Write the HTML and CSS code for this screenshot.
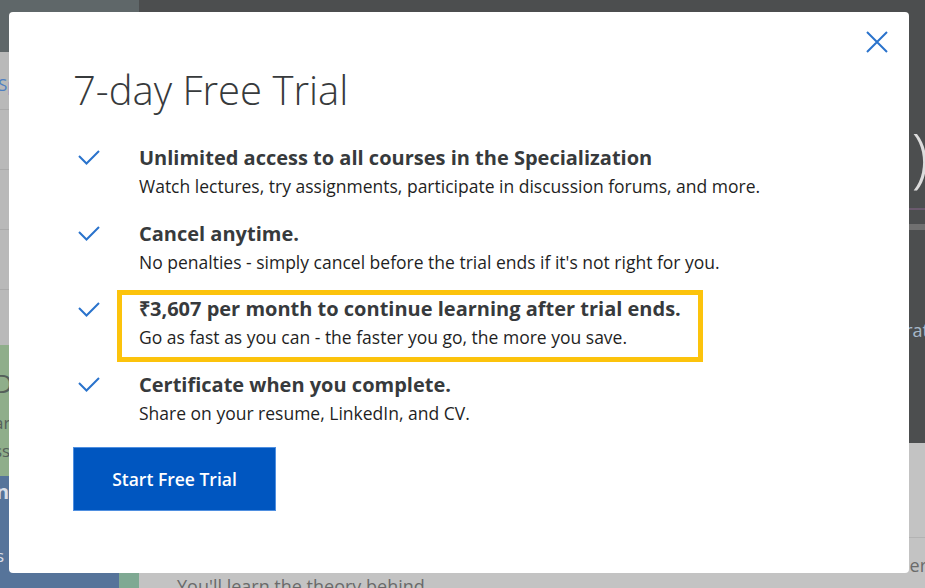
FILE: index.html
```html
<!DOCTYPE html>
<html lang="en">
<head>
    <meta charset="UTF-8">
    <meta name="viewport" content="width=device-width, initial-scale=1.0">
    <title>7-day Free Trial</title>
    <link rel="stylesheet" href="styles.css">
</head>
<body>
    <div class="page">
        <div class="side">
            <div class="side-top"></div>
            <div class="side-list">
                <div class="side-row side-link">Specialization</div>
                <div class="side-row"></div>
                <div class="side-row"></div>
                <div class="side-row"></div>
            </div>
            <div class="side-green">
                <div class="green-title">Do</div>
                <div class="green-text">art</div>
                <div class="green-text">ss</div>
            </div>
            <div class="side-bottom">
                <div class="side-blue">
                    <div class="blue-title">nr</div>
                    <div class="blue-text">s l</div>
                </div>
                <div class="side-strip"></div>
            </div>
        </div>
        <div class="main">
            <div class="hero">
                <div class="hero-mark">)</div>
                <div class="hero-stripe"></div>
                <div class="hero-text">rat</div>
            </div>
            <div class="below">
                <div class="below-tab"></div>
                <div class="below-text">er</div>
                <div class="below-line">You'll learn the theory behind</div>
            </div>
        </div>
    </div>

    <div class="modal">
        <button class="close" aria-label="Close">
            <svg width="22" height="22" viewBox="0 0 22 22">
                <path d="M1 1 L21 21 M21 1 L1 21" stroke="#2a73cc" stroke-width="2" fill="none"/>
            </svg>
        </button>
        <h1>7-day Free Trial</h1>
        <ul class="benefits">
            <li class="benefit">
                <svg class="check" width="22" height="15" viewBox="0 0 22 15">
                    <path d="M1 6 L8.5 13.5 L21 1" stroke="#2a73cc" stroke-width="2" fill="none"/>
                </svg>
                <div class="benefit-text">
                    <div class="benefit-title">Unlimited access to all courses in the Specialization</div>
                    <div class="benefit-sub">Watch lectures, try assignments, participate in discussion forums, and more.</div>
                </div>
            </li>
            <li class="benefit">
                <svg class="check" width="22" height="15" viewBox="0 0 22 15">
                    <path d="M1 6 L8.5 13.5 L21 1" stroke="#2a73cc" stroke-width="2" fill="none"/>
                </svg>
                <div class="benefit-text">
                    <div class="benefit-title">Cancel anytime.</div>
                    <div class="benefit-sub">No penalties - simply cancel before the trial ends if it's not right for you.</div>
                </div>
            </li>
            <li class="benefit">
                <svg class="check" width="22" height="15" viewBox="0 0 22 15">
                    <path d="M1 6 L8.5 13.5 L21 1" stroke="#2a73cc" stroke-width="2" fill="none"/>
                </svg>
                <div class="benefit-text highlight">
                    <div class="benefit-title">₹3,607 per month to continue learning after trial ends.</div>
                    <div class="benefit-sub">Go as fast as you can - the faster you go, the more you save.</div>
                </div>
            </li>
            <li class="benefit">
                <svg class="check" width="22" height="15" viewBox="0 0 22 15">
                    <path d="M1 6 L8.5 13.5 L21 1" stroke="#2a73cc" stroke-width="2" fill="none"/>
                </svg>
                <div class="benefit-text">
                    <div class="benefit-title">Certificate when you complete.</div>
                    <div class="benefit-sub">Share on your resume, LinkedIn, and CV.</div>
                </div>
            </li>
        </ul>
        <button class="start">Start Free Trial</button>
    </div>
</body>
</html>
```

FILE: styles.css
```css
body {
    margin: 0;
    height: 588px;
    overflow: hidden;
    font-family: "Open Sans", Arial, sans-serif;
    position: relative;
}
.page {
    display: flex;
    height: 588px;
}
.side {
    width: 139px;
    display: flex;
    flex-direction: column;
}
.side-top {
    height: 52px;
    background-color: #5f6769;
}
.side-list {
    height: 293px;
    background-color: #b9b9b9;
}
.side-row {
    height: 59px;
    border-bottom: 1px solid #aaaaaa;
}
.side-row:first-child {
    height: 57px;
}
.side-link {
    color: #4f80c2;
    font-size: 17px;
    line-height: 66px;
    margin-left: -2px;
}
.side-green {
    height: 131px;
    background-color: #8fae8a;
    color: #55605a;
    padding-top: 20px;
    box-sizing: border-box;
}
.green-title {
    font-size: 26px;
    line-height: 36px;
    margin-left: -6px;
}
.green-text {
    font-size: 17px;
    line-height: 28px;
    margin-left: -6px;
}
.green-title + .green-text {
    margin-top: 8px;
}
.side-bottom {
    flex: 1;
    display: flex;
}
.side-blue {
    width: 119px;
    background-color: #56749a;
    color: #d8dde6;
    padding-top: 2px;
}
.blue-title {
    font-size: 20px;
    font-weight: bold;
    line-height: 28px;
    margin-left: -4px;
}
.blue-text {
    font-size: 17px;
    line-height: 28px;
    margin-top: 36px;
    margin-left: -4px;
}
.side-strip {
    flex: 1;
    background-color: #7fa993;
}
.main {
    flex: 1;
    display: flex;
    flex-direction: column;
}
.hero {
    flex: none;
    height: 443px;
    background-color: #4c4e4f;
    display: flex;
    flex-direction: column;
    align-items: flex-end;
    color: #dcdcdc;
}
.hero-mark {
    font-size: 64px;
    font-weight: 300;
    line-height: 80px;
    margin-top: 116px;
    margin-right: -4px;
}
.hero-stripe {
    width: 40px;
    height: 14px;
    margin-top: 12px;
    border-top: 2px solid #6b5a6e;
    border-bottom: 6px solid #707070;
}
.hero-text {
    color: #a8b9c9;
    font-size: 18px;
    margin-top: 88px;
    margin-right: -4px;
}
.below {
    flex: 1;
    min-height: 0;
    overflow: hidden;
    background-color: #c3c3c3;
    display: flex;
    flex-direction: column;
    align-items: flex-end;
}
.below-tab {
    flex: none;
    width: 100%;
    height: 94px;
    border-bottom: 1px solid #b3b3b3;
}
.below-text {
    flex: none;
    color: #6a6a6a;
    font-size: 18px;
    line-height: 26px;
    margin-top: 14px;
    margin-right: -2px;
}
.below-line {
    flex: none;
    align-self: flex-start;
    color: #6a6a6a;
    font-size: 18px;
    padding-left: 38px;
    margin-top: -4px;
}

.modal {
    position: absolute;
    left: 9px;
    top: 12px;
    width: 900px;
    height: 561px;
    box-sizing: border-box;
    padding: 50px 64px 0;
    background-color: white;
    border-radius: 4px;
}
.close {
    position: absolute;
    top: 19px;
    right: 21px;
    background: none;
    border: none;
    padding: 0;
    width: 22px;
    height: 22px;
    cursor: pointer;
}
.close svg {
    display: block;
}
h1 {
    margin: 0;
    font-size: 40px;
    font-weight: 300;
    line-height: 56px;
    color: #373a3c;
}
.benefits {
    list-style: none;
    margin: 26px 0 0;
    padding: 0;
}
.benefit {
    display: flex;
    align-items: flex-start;
    margin-bottom: 20px;
}
.check {
    flex: none;
    margin: 6px 0 0 5px;
    width: 22px;
    height: 15px;
}
.benefit-text {
    margin-left: 39px;
}
.benefit-title {
    font-size: 20px;
    font-weight: bold;
    line-height: 28px;
    color: #373a3c;
}
.benefit-sub {
    font-size: 17.5px;
    line-height: 28px;
    color: #1f1f1f;
}
.highlight {
    border: 5px solid #fcc30c;
    padding: 0 17px 6px;
    margin: -6px -22px -11px 17px;
}
.start {
    display: block;
    margin-top: 0;
    width: 203px;
    height: 64px;
    background-color: #0056c0;
    border: 1px solid #4f8fe0;
    color: white;
    font-family: inherit;
    font-size: 17.5px;
    font-weight: 600;
    cursor: pointer;
}
```
